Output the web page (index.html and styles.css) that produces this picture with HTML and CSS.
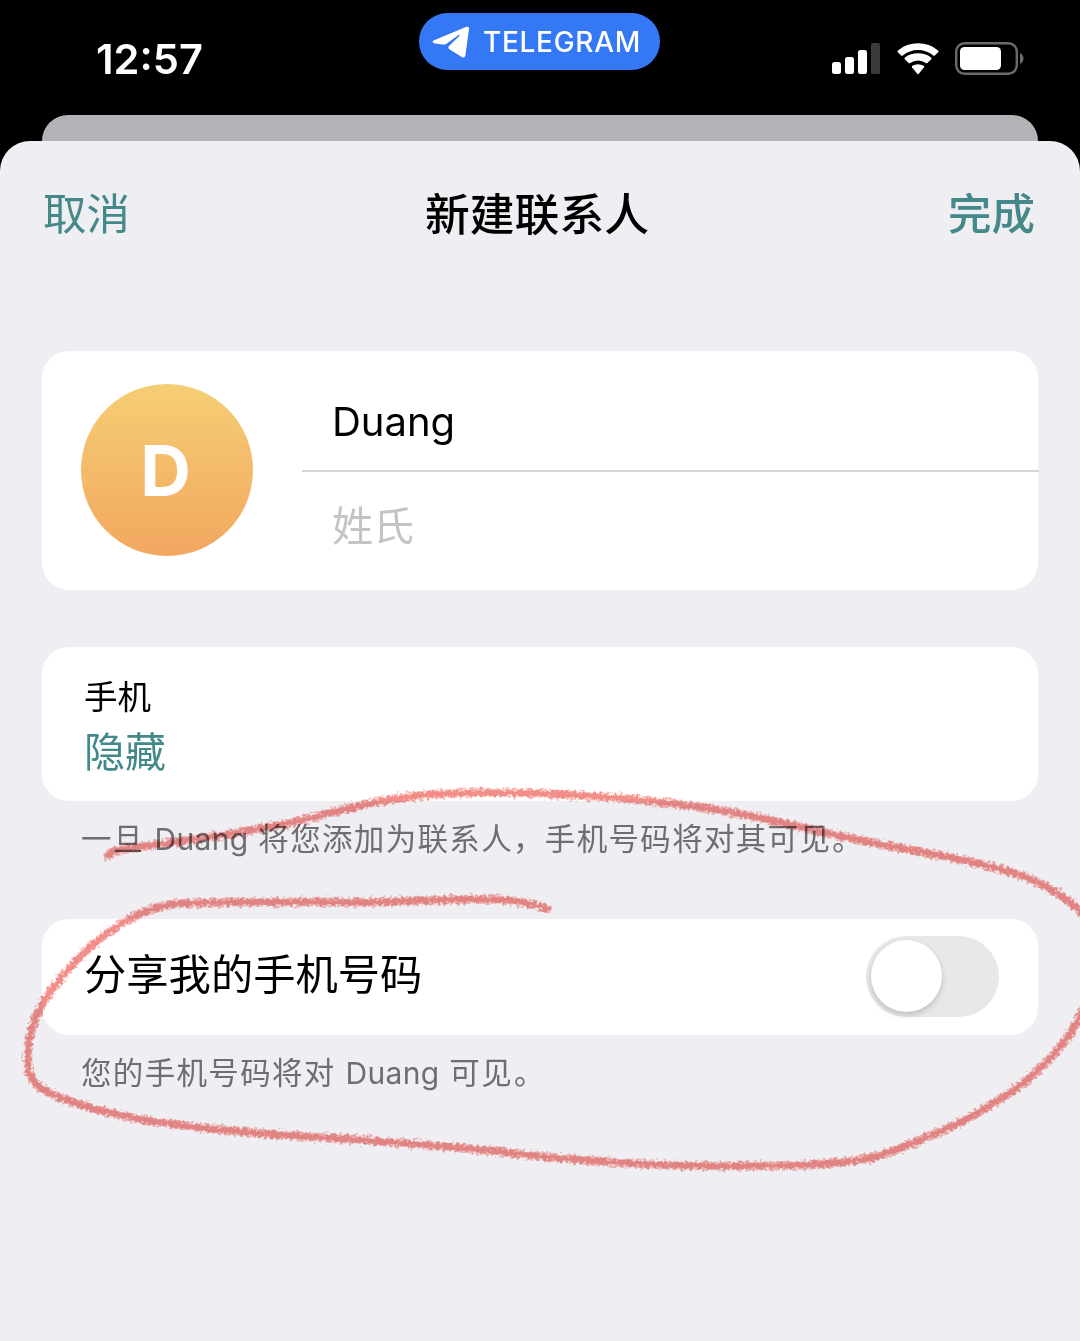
FILE: index.html
```html
<!DOCTYPE html>
<html lang="zh-CN">
<head>
<meta charset="utf-8">
<title>新建联系人</title>
<link rel="stylesheet" href="styles.css">
</head>
<body>
<div class="screen">
  <header class="status">
    <time class="clock">12:57</time>
    <div class="pill">
      <svg class="plane" width="38" height="34" viewBox="0 0 38 34"><path d="M1.500 15.600 34.500 1.800Q37.400 1 37 4L33.400 30.500Q32.600 33.600 29.800 32L17.400 24.200Q15.400 22.800 17 21L27.600 10.800Q28 9.400 26.500 10L14.500 18.700Q12.500 20 10.500 19.400L2 18.200Q-.3 17 1.500 15.600Z"/></svg>
      <span class="pill-text">TELEGRAM</span>
    </div>
    <div class="indicators">
      <svg class="signal" width="48" height="31" viewBox="0 0 48 31"><rect x="0" y="19" width="9" height="12" rx="2.5"/><rect x="13" y="14" width="9" height="17" rx="2.5"/><rect x="26" y="7" width="9" height="24" rx="2.5"/><rect class="dim" x="39" y="0" width="9" height="31" rx="1.5"/></svg>
      <svg class="wifi" width="42" height="32" viewBox="0 0 42 32"><path d="M.8 9.2Q0 8.2 1 7.4Q9.500 .3 21 .3T41 7.400Q42 8.200 41.200 9.200L37.800 12.600Q37 13.200 36.200 12.500Q29.500 7 21 7T5.800 12.500Q5 13.200 4.200 12.600Z"/><path d="M7.800 16.200Q7 15.300 8 14.500Q13.500 10.300 21 10.300T34 14.500Q35 15.300 34.200 16.200L30.400 19.900Q29.600 20.600 28.800 20Q25.500 17.400 21 17.400T13.200 20Q12.400 20.600 11.600 19.900Z"/><path d="M15 24.200Q14.400 23.300 15.300 22.700Q18 21.200 21 21.200T26.700 22.700Q27.600 23.300 27 24.200L21.800 30.700Q21 31.600 20.200 30.700Z"/></svg>
      <svg class="battery" width="69" height="33" viewBox="0 0 69 33"><rect class="shell" x="1.200" y="1.200" width="60.600" height="30.600" rx="8.500"/><rect x="5" y="5" width="41" height="23" rx="4.500"/><path class="tip" d="M65 11q3.500 2 3.500 5.500T65 22Z"/></svg>
    </div>
  </header>
  <div class="backdrop-card"></div>
  <main class="sheet">
    <nav class="navbar">
      <span class="cancel">取消</span>
      <h1 class="title">新建联系人</h1>
      <span class="done">完成</span>
    </nav>
    <section class="card profile">
      <div class="avatar">D</div>
      <div class="fields">
        <div class="field first">Duang</div>
        <div class="field last">姓氏</div>
      </div>
    </section>
    <section class="card phone">
      <div class="label">手机</div>
      <div class="value">隐藏</div>
    </section>
    <p class="note">一旦 <span class="latin">Duang</span> 将您添加为联系人，手机号码将对其可见<span class="stop">。</span></p>
    <section class="card share">
      <span class="share-label">分享我的手机号码</span>
      <span class="toggle"><span class="knob"></span></span>
    </section>
    <p class="note">您的手机号码将对 <span class="latin">Duang</span> 可见<span class="stop">。</span></p>
  </main>
  <svg class="scribble" width="1080" height="1341" viewBox="0 0 1080 1341">
    <defs>
      <filter id="crayon" filterUnits="userSpaceOnUse" x="0" y="760" width="1080" height="440">
        <feTurbulence type="fractalNoise" baseFrequency="0.3" numOctaves="3" seed="4" result="grain"/>
        <feDisplacementMap in="SourceGraphic" in2="grain" scale="8" xChannelSelector="R" yChannelSelector="G"/>
      </filter>
    </defs>
    <g filter="url(#crayon)">
      <path class="stroke soft" d="M108 856C112 850 125 849 145 846C200 839 265 830 315 817C365 804 405 793 470 793C550 792 620 796 690 806C760 815 800 828 850 838C910 851 970 859 1020 875C1050 886 1070 900 1086 917M1086 1003C1060 1070 985 1120 875 1157C830 1167 770 1166 710 1166C640 1165 580 1161 520 1154C440 1144 330 1138 270 1134C190 1128 140 1121 95 1109C70 1102 32 1091 29 1072C24 1045 34 1010 55 986C80 952 125 910 175 904C240 900 320 903 380 902C440 901 510 893 547 909"/>
      <path class="stroke core" d="M108 856C112 850 125 849 145 846C200 839 265 830 315 817C365 804 405 793 470 793C550 792 620 796 690 806C760 815 800 828 850 838C910 851 970 859 1020 875C1050 886 1070 900 1086 917M1086 1003C1060 1070 985 1120 875 1157C830 1167 770 1166 710 1166C640 1165 580 1161 520 1154C440 1144 330 1138 270 1134C190 1128 140 1121 95 1109C70 1102 32 1091 29 1072C24 1045 34 1010 55 986C80 952 125 910 175 904C240 900 320 903 380 902C440 901 510 893 547 909"/>
    </g>
  </svg>
</div>
</body>
</html>
```
FILE: styles.css
```css
* { box-sizing: border-box; }
body { margin: 0; background: #000; font-family: Inter, "Noto Sans CJK SC", sans-serif; color: #000; }
.screen { position: relative; width: 1080px; height: 1341px; overflow: hidden; display: flex; flex-direction: column; background: #000; }
.status { height: 115px; flex: none; display: grid; grid-template-columns: 419px 241px 1fr; align-items: start; color: #fff; }
.clock { padding: 34px 0 0 96px; font-size: 41.600px; line-height: 50px; font-weight: 600; }
.pill { margin-top: 13px; height: 57px; border-radius: 29px; background: #3478f6; display: flex; align-items: center; padding-left: 13px; gap: 13px; }
.plane { fill: #fff; }
.pill-text { font-size: 28px; font-weight: 500; letter-spacing: .7px; line-height: 34px; }
.indicators { display: flex; align-items: center; padding: 42px 0 0 172px; fill: #fff; }
.signal, .wifi, .battery { flex: none; fill: #fff; }
.signal .dim { fill: #3a3a3a; }
.wifi { margin-left: 17px; }
.battery { margin-left: 16px; }
.battery .shell { fill: none; stroke: #6b6b6b; stroke-width: 2.400px; }
.battery .tip { fill: #6b6b6b; }
.backdrop-card { flex: none; height: 60px; margin: 0 42px -34px; border-radius: 26px 26px 0 0; background: #b3b2b7; }
.sheet { position: relative; flex: 1; background: #efeef3; border-radius: 30px 30px 0 0; padding: 0 42px; }
.navbar { height: 210px; padding: 40px 3px 0 1px; display: grid; grid-template-columns: 1fr auto 1fr; align-items: start; line-height: 67px; font-size: 43.500px; color: #43898a; }
.title { margin: 0; font-size: 44.800px; font-weight: 600; color: #000; line-height: 69px; transform: translateX(-2px); }
.title, .done { font-weight: 500; }
.done { text-align: right; }
.card { background: #fff; border-radius: 27px; }
.profile { height: 239px; display: flex; padding: 33px 0 0 39px; }
.avatar { width: 172px; height: 172px; flex: none; border-radius: 50%; background: linear-gradient(#f5ce74, #f2a760); color: #fff; font-size: 70px; font-weight: 750; line-height: 174px; text-align: center; text-indent: -3px; }
.fields { flex: 1; margin: -33px -1px 0 49px; }
.field { padding-left: 30px; font-size: 41px; }
.first { height: 121px; border-bottom: 2px solid #d7d7d9; line-height: 142px; font-size: 40px; }
.last { color: #c4c4c6; line-height: 109px; }
.phone { margin-top: 57px; height: 154px; padding: 24px 42px; }
.label { font-size: 33.500px; line-height: 53px; }
.value { font-size: 41px; line-height: 56px; color: #43898a; }
.note { margin: 0; height: 118px; padding: 12px 0 0 39px; font-size: 30.500px; letter-spacing: 1.330px; line-height: 51px; color: #6d6d72; white-space: nowrap; }
.latin { font-size: 30px; letter-spacing: .3px; }
.stop { margin-left: 1px; }
.share { height: 116px; display: flex; align-items: center; justify-content: space-between; padding: 0 39px 2px 42px; }
.share-label { font-size: 42.300px; line-height: 60px; transform: translateY(-1px); }
.toggle { width: 133px; height: 81px; border-radius: 41px; background: #e8e8ea; padding: 4px 5px; }
.knob { display: block; width: 71px; height: 72px; border-radius: 50%; background: #fff; box-shadow: 0 3px 6px rgba(0, 0, 0, .18); }
.scribble { position: absolute; left: 0; top: 0; pointer-events: none; mix-blend-mode: multiply; }
.stroke { fill: none; stroke-linecap: round; stroke-linejoin: round; }
.soft { stroke: #f7aea6; stroke-width: 9px; opacity: .8; }
.core { stroke: #f08480; stroke-width: 5.500px; opacity: .85; }
```
